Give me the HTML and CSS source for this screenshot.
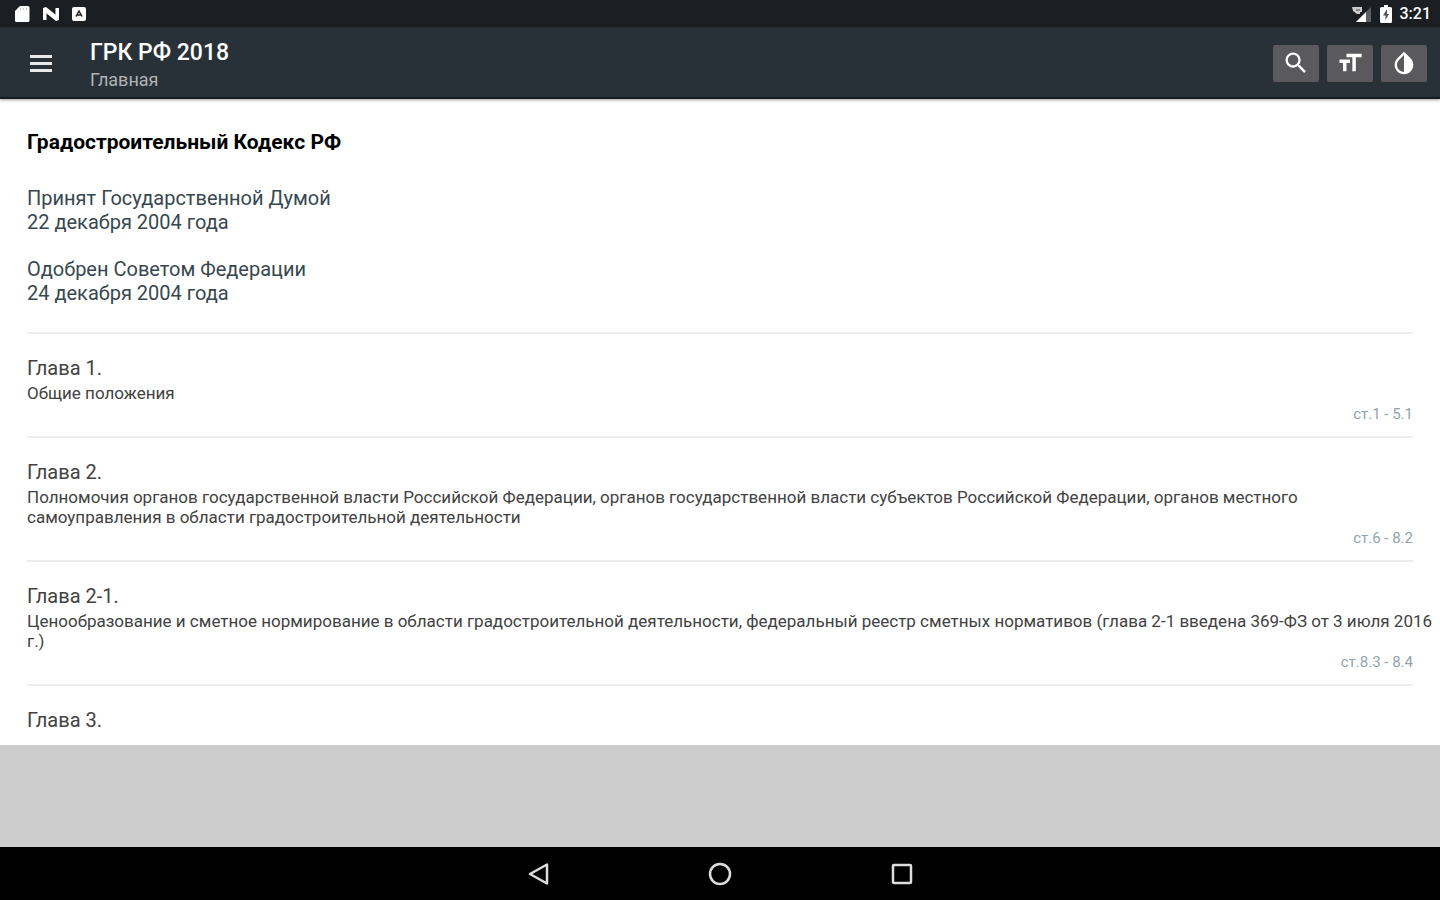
FILE: index.html
```html
<!DOCTYPE html>
<html lang="ru">
<head>
    <meta charset="UTF-8">
    <meta name="viewport" content="width=device-width, initial-scale=1.0">
    <title>ГРК РФ 2018</title>
    <link rel="stylesheet" href="styles.css">
</head>
<body>
    <div class="status-bar">
        <div class="status-icons">
            <svg width="16" height="18" viewBox="0 0 16 18"><path fill="#fff" d="M6 1h8a1.500 1.500 0 0 1 1.500 1.500v13a1.500 1.500 0 0 1-1.500 1.500H2.500A1.500 1.500 0 0 1 1 15.500V6z"/><path stroke="#ccc" d="M6.500 3v2M9.500 3v2M12.500 3v2"/></svg>
            <svg width="18" height="16" viewBox="0 0 18 16"><path fill="#999" d="M1 2h4v12H1zM13 2h4v12h-4z"/><path fill="#fff" d="M1 2l3-1 10 8V2h3v12l-3 1L4 7v7H1z"/></svg>
            <svg width="14" height="16" viewBox="0 0 14 16"><rect width="14" height="14" y="1" rx="2" fill="#fff"/><path fill="none" stroke="#222" stroke-width="1.500" d="M4 10.500L7 5l3 5.500M5 9h4"/></svg>
        </div>
        <div class="status-icons status-right">
            <svg width="20" height="18" viewBox="0 0 20 18"><path fill="#5c6064" d="M19 2v15H4z"/><path fill="#fff" d="M14 7v10H4z"/><path fill="#ccc" d="M0 2h10v5H8v2H5L1 6z"/><path stroke="#444" d="M4 5h4"/></svg>
            <svg width="12" height="18" viewBox="0 0 12 18"><path fill="#fff" d="M4 0h4v2h2.500A1.500 1.500 0 0 1 12 3.500v13a1.500 1.500 0 0 1-1.500 1.500h-9A1.500 1.500 0 0 1 0 16.500v-13A1.500 1.500 0 0 1 1.500 2H4z"/><path fill="#555" d="M7 4L3 10.500h2.500V15L9 9H7z"/></svg>
            <span class="clock">3:21</span>
        </div>
    </div>

    <header class="toolbar">
        <button class="menu-btn" aria-label="Меню">
            <svg width="22" height="20" viewBox="0 0 22 20"><path stroke="#e8e8e8" stroke-width="3" d="M0 3.500h22M0 10.500h22M0 17.500h22"/></svg>
        </button>
        <div class="titles">
            <h1>ГРК РФ 2018</h1>
            <div class="subtitle">Главная</div>
        </div>
        <div class="actions">
            <button class="action-btn" aria-label="Поиск">
                <svg width="28" height="28" viewBox="0 0 24 24"><path fill="#fff" d="M15.500 14h-.79l-.28-.27A6.471 6.471 0 0 0 16 9.500 6.500 6.500 0 1 0 9.500 16c1.610 0 3.090-.59 4.230-1.570l.27.280v.79l5 4.990L20.490 19l-4.990-5zm-6 0C7.010 14 5 11.990 5 9.500S7.010 5 9.500 5 14 7.010 14 9.500 11.990 14 9.500 14z"/></svg>
            </button>
            <button class="action-btn" aria-label="Размер шрифта">
                <svg width="28" height="28" viewBox="0 0 24 24"><path fill="#fff" d="M9 4v3h5v12h3V7h5V4H9zm-6 8h3v7h3v-7h3V9H3v3z"/></svg>
            </button>
            <button class="action-btn" aria-label="Контраст">
                <svg width="28" height="28" viewBox="0 0 24 24"><path fill="#fff" d="M17.660 7.930L12 2.270 6.340 7.930c-3.120 3.120-3.120 8.190 0 11.310C7.900 20.800 9.950 21.580 12 21.580s4.100-.78 5.660-2.340c3.120-3.120 3.120-8.190 0-11.310zM12 19.590c-1.600 0-3.110-.62-4.240-1.760C6.620 16.690 6 15.190 6 13.590s.62-3.110 1.760-4.240L12 5.100v14.490z"/></svg>
            </button>
        </div>
    </header>

    <main class="content">
        <section class="intro">
            <h2>Градостроительный Кодекс РФ</h2>
            <p>Принят Государственной Думой<br>22 декабря 2004 года</p>
            <p>Одобрен Советом Федерации<br>24 декабря 2004 года</p>
        </section>

        <a class="chapter" href="#chapter-1">
            <span class="chapter-title">Глава 1.</span>
            <span class="chapter-text">Общие положения</span>
            <span class="chapter-range">ст.1 - 5.1</span>
        </a>
        <a class="chapter" href="#chapter-2">
            <span class="chapter-title">Глава 2.</span>
            <span class="chapter-text">Полномочия органов государственной власти Российской Федерации, органов государственной власти субъектов Российской Федерации, органов местного самоуправления в области градостроительной деятельности</span>
            <span class="chapter-range">ст.6 - 8.2</span>
        </a>
        <a class="chapter" href="#chapter-2-1">
            <span class="chapter-title">Глава 2-1.</span>
            <span class="chapter-text">Ценообразование и сметное нормирование в области градостроительной деятельности, федеральный реестр сметных нормативов (глава 2-1 введена 369-ФЗ от 3 июля 2016 г.)</span>
            <span class="chapter-range">ст.8.3 - 8.4</span>
        </a>
        <a class="chapter" href="#chapter-3">
            <span class="chapter-title">Глава 3.</span>
        </a>
    </main>

    <div class="banner"></div>

    <nav class="nav-bar">
        <button class="nav-btn" aria-label="Назад">
            <svg width="24" height="24" viewBox="0 0 24 24"><path fill="none" stroke="#ddd" stroke-width="2.500" stroke-linejoin="round" d="M21 2.500v19L4 12z"/></svg>
        </button>
        <button class="nav-btn" aria-label="Домой">
            <svg width="24" height="24" viewBox="0 0 24 24"><circle cx="12" cy="12" r="10" fill="none" stroke="#ddd" stroke-width="2.500"/></svg>
        </button>
        <button class="nav-btn" aria-label="Недавние">
            <svg width="24" height="24" viewBox="0 0 24 24"><rect x="3" y="3" width="18" height="18" rx="1" fill="none" stroke="#ddd" stroke-width="2.500"/></svg>
        </button>
    </nav>
</body>
</html>
```

FILE: styles.css
```css
* {
    box-sizing: border-box;
}
body {
    margin: 0;
    height: 100vh;
    display: flex;
    flex-direction: column;
    font-family: Roboto, "Noto Sans", sans-serif;
    background: #fff;
    color: #37474f;
    overflow: hidden;
}
button {
    border: none;
    padding: 0;
    background: none;
    display: flex;
    align-items: center;
    justify-content: center;
    cursor: pointer;
}
.status-bar {
    flex: none;
    display: flex;
    align-items: center;
    justify-content: space-between;
    height: 27px;
    padding: 0 9px 0 14px;
    background: #1b1f23;
}
.status-icons {
    display: flex;
    align-items: center;
    gap: 12px;
}
.status-right {
    gap: 8px;
}
.clock {
    color: #fff;
    font-size: 16px;
    font-weight: 500;
}
.toolbar {
    flex: none;
    display: flex;
    align-items: center;
    height: 72px;
    padding: 2px 13px 0 30px;
    background: #293138;
    border-bottom: 2px solid #111c25;
    box-shadow: 0 1px 3px rgba(0, 0, 0, 0.4);
}
.titles {
    flex: 1;
    margin-left: 38px;
    padding-top: 6px;
}
.titles h1 {
    margin: 0;
    font-size: 23px;
    line-height: 28px;
    font-weight: 500;
    color: #fff;
}
.subtitle {
    font-size: 18px;
    line-height: 26px;
    color: #b0b3b6;
}
.actions {
    display: flex;
    gap: 8px;
}
.action-btn {
    width: 46px;
    height: 37px;
    background: #5a595d;
    border-radius: 2px;
}
.content {
    flex: 1;
    min-height: 0;
    overflow: hidden;
    padding: 31px 27px 0;
}
.intro {
    font-size: 20px;
    line-height: 24px;
}
.intro h2 {
    margin: 0 0 32px;
    font-size: 21px;
    font-weight: 700;
    color: #000;
}
.intro p {
    margin: 0 0 23px;
}
.intro p:last-child {
    margin-bottom: 27px;
}
.chapter {
    display: flex;
    flex-direction: column;
    padding: 22px 0 12px;
    border-top: 2px solid #ececec;
    color: #424242;
    text-decoration: none;
}
.chapter-title {
    font-size: 20px;
    line-height: 24px;
}
.chapter-text {
    margin: 3px -22px 1px 0;
    font-size: 17px;
    line-height: 20px;
}
.chapter-range {
    align-self: flex-end;
    font-size: 15px;
    line-height: 20px;
    color: #90a4ae;
}
.banner {
    flex: none;
    height: 102px;
    background: #ccc;
}
.nav-bar {
    flex: none;
    display: flex;
    justify-content: center;
    gap: 122px;
    height: 53px;
    background: #000;
}
.nav-btn {
    width: 60px;
}
```
